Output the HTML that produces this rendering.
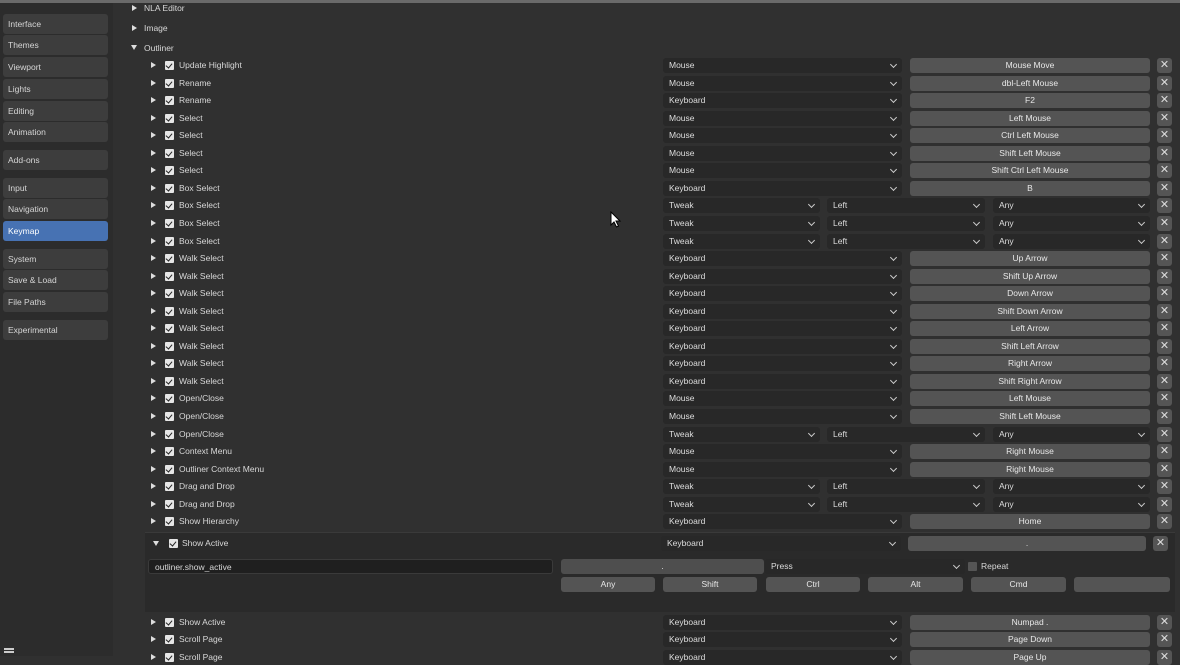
<!DOCTYPE html>
<html><head><meta charset="utf-8"><style>
*{margin:0;padding:0;box-sizing:border-box}
body{width:1180px;height:656px;overflow:hidden;background:#303030;font-family:"Liberation Sans",sans-serif;font-size:8.5px;color:#d8d8d8;position:relative}
.topbar{position:absolute;left:0;top:0;width:1180px;height:3px;background:#6a6a6a}
.side{position:absolute;left:0;top:3px;width:113px;height:653px;background:#2c2c2c}
.tab{position:absolute;left:3px;width:105px;height:20px;background:#3d3d3d;border-radius:3px;padding-left:5px;line-height:20px;font-size:8.5px;color:#d6d6d6}
.tab.a{background:#4772b3;color:#fff}
.a0{position:absolute;left:0;width:1180px;height:16px}
.tri{position:absolute;left:151px;top:5px;width:0;height:0;border-top:3px solid transparent;border-bottom:3px solid transparent;border-left:5px solid #ddd}
.trd{position:absolute;top:6px;width:0;height:0;border-left:3px solid transparent;border-right:3px solid transparent;border-top:5px solid #ddd}
.cb{position:absolute;left:165px;top:4px;width:9px;height:9px;background:#e6e6e6;border-radius:1px}
.cb:after{content:"";position:absolute;left:2px;top:1px;width:3px;height:5px;border:solid #222;border-width:0 1.5px 1.5px 0;transform:rotate(40deg)}
.nm{position:absolute;left:179px;top:0;line-height:16px}
.dd{position:absolute;top:1px;height:15px;background:#282828;border-radius:3px;padding-left:6px;line-height:15px;color:#ddd}
.dd:after{content:"";position:absolute;right:6px;top:4px;width:4px;height:4px;border:solid #ccc;border-width:0 1.2px 1.2px 0;transform:rotate(45deg)}
.d1{left:663px;width:239px}
.t1{left:663px;width:157px}.t2{left:827px;width:158px}.t3{left:993px;width:157px}
.k{position:absolute;left:910px;width:240px;top:1px;height:15px;background:#545454;border-radius:3px;text-align:center;line-height:15px;color:#e8e8e8}
.x{position:absolute;left:1157px;top:1px;width:15px;height:15px;background:#555;border-radius:3px;text-align:center;line-height:15px;font-size:11px;color:#ddd}
.b{position:absolute;height:15px;background:#545454;border-radius:3px;text-align:center;line-height:15px;color:#e8e8e8}
.hd{position:absolute;left:144px;line-height:14px}
</style></head><body>
<div class="topbar"></div>
<div class="side">
<div class="tab" style="top:11px">Interface</div>
<div class="tab" style="top:32px">Themes</div>
<div class="tab" style="top:54px">Viewport</div>
<div class="tab" style="top:76px">Lights</div>
<div class="tab" style="top:98px">Editing</div>
<div class="tab" style="top:119px">Animation</div>
<div class="tab" style="top:147px">Add-ons</div>
<div class="tab" style="top:175px">Input</div>
<div class="tab" style="top:196px">Navigation</div>
<div class="tab a" style="top:218px">Keymap</div>
<div class="tab" style="top:246px">System</div>
<div class="tab" style="top:267px">Save &amp; Load</div>
<div class="tab" style="top:289px">File Paths</div>
<div class="tab" style="top:317px">Experimental</div>
</div>
<div style="position:absolute;left:4px;top:648px;width:10px;height:1.5px;background:#ccc;box-shadow:0 3px 0 #ccc"></div>

<div class="tri" style="left:132px;top:5px"></div><div class="hd" style="top:1px">NLA Editor</div>
<div class="tri" style="left:132px;top:25px"></div><div class="hd" style="top:21px">Image</div>
<div class="trd" style="left:131px;top:45px"></div><div class="hd" style="top:41px">Outliner</div>

<div class="a0" style="top:57px"><div class="tri"></div><div class="cb"></div><div class="nm">Update Highlight</div><div class="dd d1">Mouse</div><div class="k">Mouse Move</div><div class="x">✕</div></div>
<div class="a0" style="top:75px"><div class="tri"></div><div class="cb"></div><div class="nm">Rename</div><div class="dd d1">Mouse</div><div class="k">dbl-Left Mouse</div><div class="x">✕</div></div>
<div class="a0" style="top:92px"><div class="tri"></div><div class="cb"></div><div class="nm">Rename</div><div class="dd d1">Keyboard</div><div class="k">F2</div><div class="x">✕</div></div>
<div class="a0" style="top:110px"><div class="tri"></div><div class="cb"></div><div class="nm">Select</div><div class="dd d1">Mouse</div><div class="k">Left Mouse</div><div class="x">✕</div></div>
<div class="a0" style="top:127px"><div class="tri"></div><div class="cb"></div><div class="nm">Select</div><div class="dd d1">Mouse</div><div class="k">Ctrl Left Mouse</div><div class="x">✕</div></div>
<div class="a0" style="top:145px"><div class="tri"></div><div class="cb"></div><div class="nm">Select</div><div class="dd d1">Mouse</div><div class="k">Shift Left Mouse</div><div class="x">✕</div></div>
<div class="a0" style="top:162px"><div class="tri"></div><div class="cb"></div><div class="nm">Select</div><div class="dd d1">Mouse</div><div class="k">Shift Ctrl Left Mouse</div><div class="x">✕</div></div>
<div class="a0" style="top:180px"><div class="tri"></div><div class="cb"></div><div class="nm">Box Select</div><div class="dd d1">Keyboard</div><div class="k">B</div><div class="x">✕</div></div>
<div class="a0" style="top:197px"><div class="tri"></div><div class="cb"></div><div class="nm">Box Select</div><div class="dd t1">Tweak</div><div class="dd t2">Left</div><div class="dd t3">Any</div><div class="x">✕</div></div>
<div class="a0" style="top:215px"><div class="tri"></div><div class="cb"></div><div class="nm">Box Select</div><div class="dd t1">Tweak</div><div class="dd t2">Left</div><div class="dd t3">Any</div><div class="x">✕</div></div>
<div class="a0" style="top:233px"><div class="tri"></div><div class="cb"></div><div class="nm">Box Select</div><div class="dd t1">Tweak</div><div class="dd t2">Left</div><div class="dd t3">Any</div><div class="x">✕</div></div>
<div class="a0" style="top:250px"><div class="tri"></div><div class="cb"></div><div class="nm">Walk Select</div><div class="dd d1">Keyboard</div><div class="k">Up Arrow</div><div class="x">✕</div></div>
<div class="a0" style="top:268px"><div class="tri"></div><div class="cb"></div><div class="nm">Walk Select</div><div class="dd d1">Keyboard</div><div class="k">Shift Up Arrow</div><div class="x">✕</div></div>
<div class="a0" style="top:285px"><div class="tri"></div><div class="cb"></div><div class="nm">Walk Select</div><div class="dd d1">Keyboard</div><div class="k">Down Arrow</div><div class="x">✕</div></div>
<div class="a0" style="top:303px"><div class="tri"></div><div class="cb"></div><div class="nm">Walk Select</div><div class="dd d1">Keyboard</div><div class="k">Shift Down Arrow</div><div class="x">✕</div></div>
<div class="a0" style="top:320px"><div class="tri"></div><div class="cb"></div><div class="nm">Walk Select</div><div class="dd d1">Keyboard</div><div class="k">Left Arrow</div><div class="x">✕</div></div>
<div class="a0" style="top:338px"><div class="tri"></div><div class="cb"></div><div class="nm">Walk Select</div><div class="dd d1">Keyboard</div><div class="k">Shift Left Arrow</div><div class="x">✕</div></div>
<div class="a0" style="top:355px"><div class="tri"></div><div class="cb"></div><div class="nm">Walk Select</div><div class="dd d1">Keyboard</div><div class="k">Right Arrow</div><div class="x">✕</div></div>
<div class="a0" style="top:373px"><div class="tri"></div><div class="cb"></div><div class="nm">Walk Select</div><div class="dd d1">Keyboard</div><div class="k">Shift Right Arrow</div><div class="x">✕</div></div>
<div class="a0" style="top:390px"><div class="tri"></div><div class="cb"></div><div class="nm">Open/Close</div><div class="dd d1">Mouse</div><div class="k">Left Mouse</div><div class="x">✕</div></div>
<div class="a0" style="top:408px"><div class="tri"></div><div class="cb"></div><div class="nm">Open/Close</div><div class="dd d1">Mouse</div><div class="k">Shift Left Mouse</div><div class="x">✕</div></div>
<div class="a0" style="top:426px"><div class="tri"></div><div class="cb"></div><div class="nm">Open/Close</div><div class="dd t1">Tweak</div><div class="dd t2">Left</div><div class="dd t3">Any</div><div class="x">✕</div></div>
<div class="a0" style="top:443px"><div class="tri"></div><div class="cb"></div><div class="nm">Context Menu</div><div class="dd d1">Mouse</div><div class="k">Right Mouse</div><div class="x">✕</div></div>
<div class="a0" style="top:461px"><div class="tri"></div><div class="cb"></div><div class="nm">Outliner Context Menu</div><div class="dd d1">Mouse</div><div class="k">Right Mouse</div><div class="x">✕</div></div>
<div class="a0" style="top:478px"><div class="tri"></div><div class="cb"></div><div class="nm">Drag and Drop</div><div class="dd t1">Tweak</div><div class="dd t2">Left</div><div class="dd t3">Any</div><div class="x">✕</div></div>
<div class="a0" style="top:496px"><div class="tri"></div><div class="cb"></div><div class="nm">Drag and Drop</div><div class="dd t1">Tweak</div><div class="dd t2">Left</div><div class="dd t3">Any</div><div class="x">✕</div></div>
<div class="a0" style="top:513px"><div class="tri"></div><div class="cb"></div><div class="nm">Show Hierarchy</div><div class="dd d1">Keyboard</div><div class="k">Home</div><div class="x">✕</div></div>

<div style="position:absolute;left:145px;top:532px;width:1030px;height:80px;background:#2a2a2a;border-top:1px solid #3a3a3a"></div>
<div class="a0" style="top:535px"><div class="trd" style="left:153px"></div><div class="cb" style="left:169px"></div><div class="nm" style="left:182px">Show Active</div><div class="dd" style="left:661px;width:240px">Keyboard</div><div class="k" style="left:908px;width:238px">.</div><div class="x" style="left:1153px">✕</div></div>
<div style="position:absolute;left:148px;top:559px;width:405px;height:15px;background:#1f1f1f;border-radius:3px;padding-left:6px;line-height:15px;border:1px solid #3a3a3a">outliner.show_active</div>
<div class="b" style="left:561px;top:559px;width:203px;background:#4e4e4e">.</div>
<div class="dd" style="left:765px;top:559px;width:200px">Press</div>
<div style="position:absolute;left:968px;top:562px;width:9px;height:9px;background:#555;border-radius:1px"></div>
<div style="position:absolute;left:981px;top:559px;line-height:15px">Repeat</div>
<div class="b" style="left:561px;top:577px;width:94px">Any</div>
<div class="b" style="left:663px;top:577px;width:94px">Shift</div>
<div class="b" style="left:766px;top:577px;width:94px">Ctrl</div>
<div class="b" style="left:868px;top:577px;width:95px">Alt</div>
<div class="b" style="left:971px;top:577px;width:95px">Cmd</div>
<div class="b" style="left:1074px;top:577px;width:96px"></div>

<div class="a0" style="top:614px"><div class="tri"></div><div class="cb"></div><div class="nm">Show Active</div><div class="dd d1">Keyboard</div><div class="k">Numpad .</div><div class="x">✕</div></div>
<div class="a0" style="top:631px"><div class="tri"></div><div class="cb"></div><div class="nm">Scroll Page</div><div class="dd d1">Keyboard</div><div class="k">Page Down</div><div class="x">✕</div></div>
<div class="a0" style="top:649px"><div class="tri"></div><div class="cb"></div><div class="nm">Scroll Page</div><div class="dd d1">Keyboard</div><div class="k">Page Up</div><div class="x">✕</div></div>

<svg style="position:absolute;left:610px;top:211px" width="12" height="18" viewBox="0 0 12 18"><path d="M1 1 L1 14 L4 11 L6.5 16 L8.5 15 L6 10 L10 10 Z" fill="#fff" stroke="#000" stroke-width="1"/></svg>
</body></html>
